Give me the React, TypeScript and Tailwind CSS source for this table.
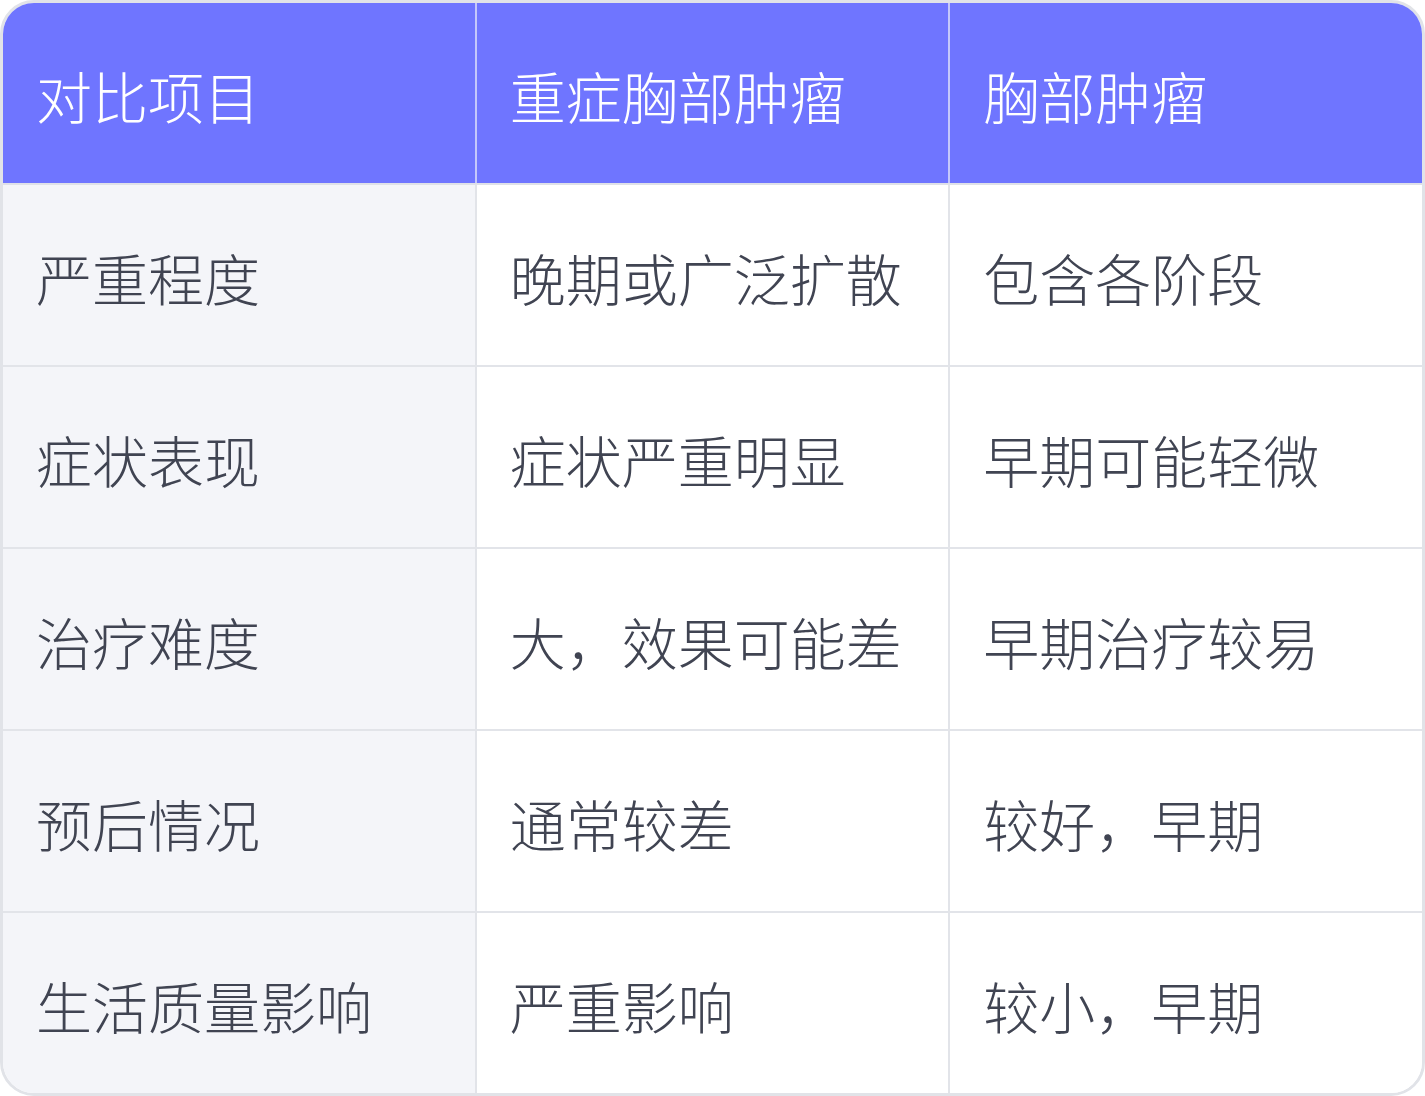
import React from "react";

const header = ["对比项目", "重症胸部肿瘤", "胸部肿瘤"];
const rows = [
  ["严重程度", "晚期或广泛扩散", "包含各阶段"],
  ["症状表现", "症状严重明显", "早期可能轻微"],
  ["治疗难度", "大，效果可能差", "早期治疗较易"],
  ["预后情况", "通常较差", "较好，早期"],
  ["生活质量影响", "严重影响", "较小，早期"],
];

export default function App() {
  return (
    <div
      className="w-[1425px] h-[1096px] bg-white"
      style={{ fontFamily: '"Noto Sans CJK SC", "Noto Sans", sans-serif' }}
    >
      <div className="w-full h-full border-[3px] border-[#e1e3e8] rounded-[34px] overflow-hidden flex flex-col">
        <div className="flex h-[182px] border-b-2 border-[#dfe1e8] bg-[#6f75ff] shrink-0">
          {header.map((h, i) => (
            <div
              key={i}
              className={`flex-1 flex items-center pl-[33px] pt-[4px] text-[56px] font-light text-white ${
                i < 2 ? "border-r-2 border-[#c4c7fb]" : ""
              }`}
            >
              {h}
            </div>
          ))}
        </div>
        {rows.map((r, ri) => (
          <div
            key={ri}
            className={`flex shrink-0 ${
              ri < rows.length - 1 ? "h-[182px] border-b-2 border-[#e2e4e9]" : "h-[180px]"
            }`}
          >
            {r.map((c, ci) => (
              <div
                key={ci}
                className={`flex-1 flex items-center pl-[33px] pt-[4px] text-[56px] font-light text-[#404452] ${
                  ci === 0 ? "bg-[#f4f5f9]" : "bg-white"
                } ${ci < 2 ? "border-r-2 border-[#e2e4e9]" : ""}`}
              >
                {c}
              </div>
            ))}
          </div>
        ))}
      </div>
    </div>
  );
}
